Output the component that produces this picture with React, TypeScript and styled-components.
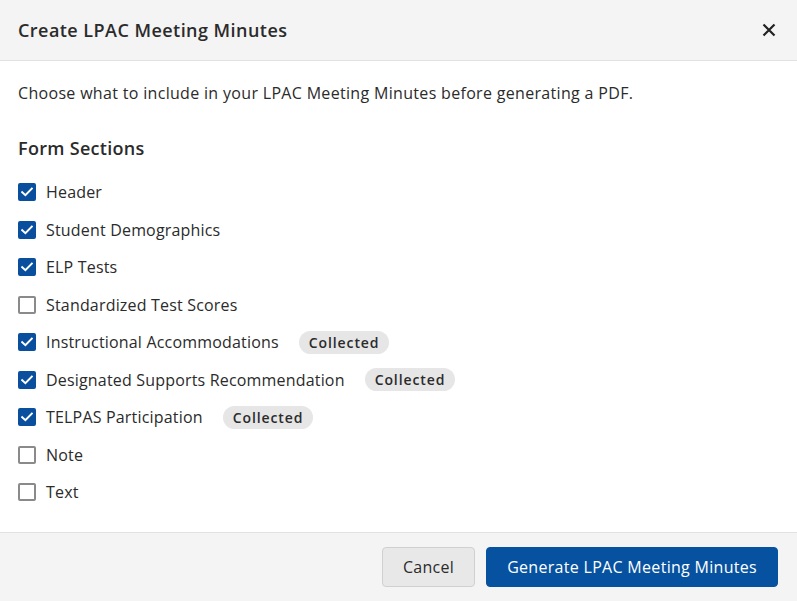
import React from "react";
import styled, { createGlobalStyle } from "styled-components";

const Global = createGlobalStyle`
  html, body { margin: 0; padding: 0; background: #fff; }
  body { font-family: "Open Sans", "Liberation Sans", sans-serif; color: #262626; }
  * { box-sizing: border-box; }
`;

const Dialog = styled.div`
  width: 797px;
  height: 601px;
  display: flex;
  flex-direction: column;
  background: #fff;
`;

const Header = styled.header`
  height: 61px;
  flex: none;
  background: #f4f4f4;
  border-bottom: 1px solid #e2e2e2;
  display: flex;
  align-items: center;
  justify-content: space-between;
  padding: 0 18px;
`;

const Title = styled.h1`
  margin: 0;
  font-size: 18px;
  font-weight: 600;
  letter-spacing: 0.45px;
  color: #2b2b2b;
`;

const CloseButton = styled.button`
  border: none;
  background: none;
  padding: 0;
  width: 24px;
  height: 24px;
  display: flex;
  align-items: center;
  justify-content: center;
  margin-right: -2px;
  cursor: pointer;
`;

const Body = styled.main`
  flex: 1;
  padding: 20px 18px 0;
`;

const Description = styled.p`
  margin: 0;
  font-size: 16px;
  line-height: 24px;
  letter-spacing: 0.32px;
  color: #2b2b2b;
`;

const SectionTitle = styled.h2`
  margin: 31px 0 20px;
  font-size: 18px;
  line-height: 24px;
  font-weight: 600;
  letter-spacing: 0.3px;
  color: #2b2b2b;
`;

const List = styled.ul`
  list-style: none;
  margin: 0;
  padding: 0;
  display: flex;
  flex-direction: column;
  gap: 13.5px;
`;

const Row = styled.li`
  display: flex;
  align-items: center;
  height: 24px;
`;

const Box = styled.span<{ $checked: boolean }>`
  width: 18px;
  height: 18px;
  border-radius: 2px;
  flex: none;
  display: flex;
  align-items: center;
  justify-content: center;
  background: ${(p) => (p.$checked ? "#0a4f9e" : "#fff")};
  border: 2px solid ${(p) => (p.$checked ? "#0a4f9e" : "#8a8a8a")};
  margin-right: 10px;
`;

const Label = styled.span`
  font-size: 16px;
  letter-spacing: 0.18px;
  color: #2b2b2b;
`;

const Badge = styled.span`
  margin-left: 20px;
  height: 23px;
  padding: 0 10px;
  border-radius: 12px;
  background: #e6e6e6;
  display: inline-flex;
  align-items: center;
  font-size: 14px;
  font-weight: 600;
  letter-spacing: 0.9px;
  color: #2b2b2b;
`;

const Footer = styled.footer`
  height: 69px;
  flex: none;
  background: #f4f4f4;
  border-top: 1px solid #e2e2e2;
  display: flex;
  align-items: center;
  justify-content: flex-end;
  gap: 11px;
  padding: 0 19px 0 0;
`;

const Button = styled.button<{ $primary?: boolean }>`
  height: 40px;
  border-radius: 4px;
  font-family: inherit;
  font-size: 16px;
  letter-spacing: 0.3px;
  cursor: pointer;
  padding: 0 20px;
  background: ${(p) => (p.$primary ? "#0652a0" : "#e8e8e8")};
  color: ${(p) => (p.$primary ? "#fff" : "#2b2b2b")};
  border: 1px solid ${(p) => (p.$primary ? "#0652a0" : "#d0d0d0")};
`;

const items: { label: string; checked: boolean; collected?: boolean }[] = [
  { label: "Header", checked: true },
  { label: "Student Demographics", checked: true },
  { label: "ELP Tests", checked: true },
  { label: "Standardized Test Scores", checked: false },
  { label: "Instructional Accommodations", checked: true, collected: true },
  { label: "Designated Supports Recommendation", checked: true, collected: true },
  { label: "TELPAS Participation", checked: true, collected: true },
  { label: "Note", checked: false },
  { label: "Text", checked: false },
];

const Check = () => (
  <svg width="12" height="10" viewBox="0 0 12 10" fill="none">
    <path d="M1.2 5.2 L4.4 8.2 L10.8 1.6" stroke="#fff" strokeWidth="2" strokeLinecap="square" />
  </svg>
);

export default function App() {
  return (
    <>
      <Global />
      <Dialog>
        <Header>
          <Title>Create LPAC Meeting Minutes</Title>
          <CloseButton aria-label="Close">
            <svg width="14" height="14" viewBox="0 0 14 14">
              <path d="M1.5 1.5 L12.5 12.5 M12.5 1.5 L1.5 12.5" stroke="#222" strokeWidth="2.2" />
            </svg>
          </CloseButton>
        </Header>
        <Body>
          <Description>
            Choose what to include in your LPAC Meeting Minutes before generating a PDF.
          </Description>
          <SectionTitle>Form Sections</SectionTitle>
          <List>
            {items.map((it) => (
              <Row key={it.label}>
                <Box $checked={it.checked}>{it.checked && <Check />}</Box>
                <Label>{it.label}</Label>
                {it.collected && <Badge>Collected</Badge>}
              </Row>
            ))}
          </List>
        </Body>
        <Footer>
          <Button>Cancel</Button>
          <Button $primary>Generate LPAC Meeting Minutes</Button>
        </Footer>
      </Dialog>
    </>
  );
}
